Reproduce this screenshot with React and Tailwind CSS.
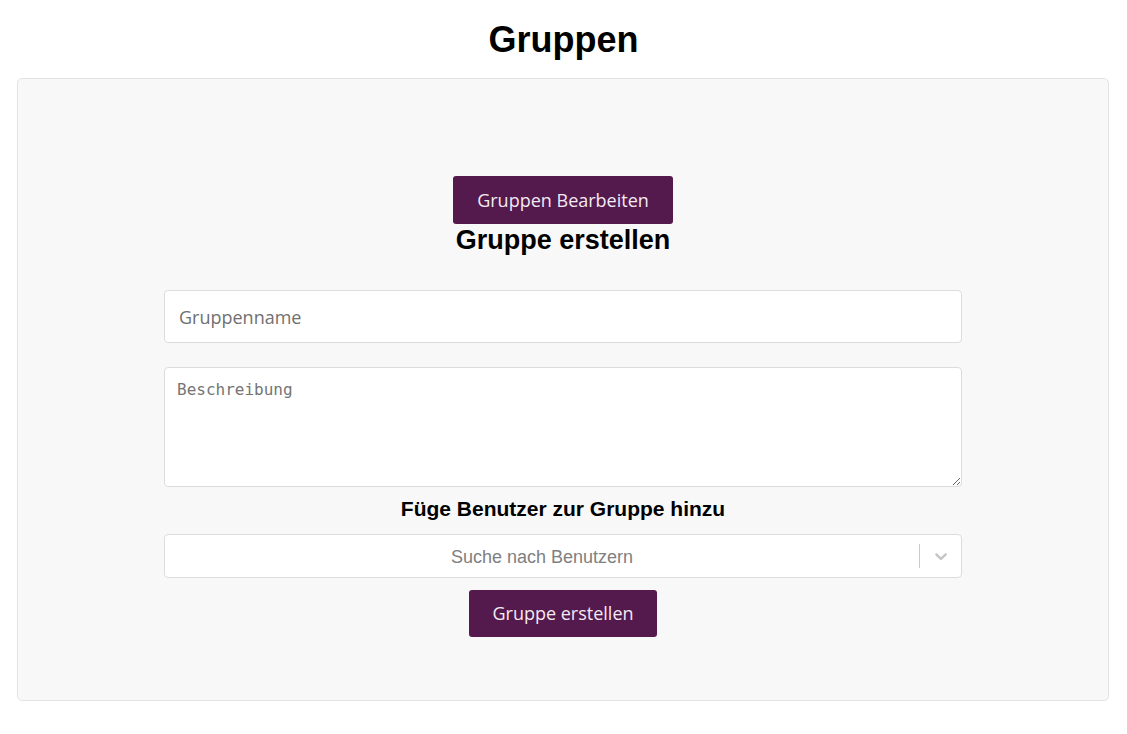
import { useState } from "react";

export default function App() {
  const [name, setName] = useState("");
  const [desc, setDesc] = useState("");

  return (
    <div className="min-h-screen bg-white font-['Liberation_Sans',Arial,sans-serif]">
      <h1 className="pt-[19px] text-center text-[36px] leading-[41px] font-bold text-black">
        Gruppen
      </h1>
      <div className="ml-[17px] mr-[18px] mt-[18px] rounded-[5px] border border-[#e3e3e3] bg-[#f8f8f8] pt-[97px] pb-[63px]">
        <div className="flex flex-col items-center">
          <button className="h-[48px] w-[220px] rounded-[3px] bg-[#54194d] font-['Open_Sans',sans-serif] text-[18px] text-[#f3eaf2]">
            Gruppen Bearbeiten
          </button>
          <h2 className="mt-[1px] text-[27px] leading-[31px] font-bold text-black">
            Gruppe erstellen
          </h2>
        </div>
        <div className="mx-auto mt-[34px] w-[798px]">
          <input
            value={name}
            onChange={(e) => setName(e.target.value)}
            placeholder="Gruppenname"
            className="block h-[53px] w-full rounded-[4px] border border-[#dcdcdc] bg-white px-[14px] font-['Open_Sans',sans-serif] text-[18px] text-black placeholder:text-[#707070] focus:outline-none"
          />
          <textarea
            value={desc}
            onChange={(e) => setDesc(e.target.value)}
            placeholder="Beschreibung"
            className="mt-[24px] block h-[120px] w-full rounded-[4px] border border-[#dcdcdc] bg-white px-[12px] py-[10px] font-['DejaVu_Sans_Mono',monospace] text-[16px] text-black placeholder:text-[#757575] focus:outline-none"
          />
          <h3 className="mt-[10px] text-center text-[21px] leading-[24px] font-bold text-black">
            Füge Benutzer zur Gruppe hinzu
          </h3>
          <div className="mt-[13px] flex h-[44px] w-full items-center rounded-[4px] border border-[#dcdcdc] bg-white">
            <div className="flex-1 pt-[2px] text-center text-[18px] text-[#808080]">
              Suche nach Benutzern
            </div>
            <span className="h-[24px] w-px bg-[#cccccc]" />
            <div className="flex w-[41px] items-center justify-center">
              <svg width="20" height="20" viewBox="0 0 20 20" fill="#c4c4c4">
                <path d="M4.516 7.548c0.436-0.446 1.043-0.481 1.576 0l3.908 3.747 3.908-3.747c0.533-0.481 1.141-0.446 1.574 0 0.436 0.445 0.408 1.197 0 1.615-0.406 0.418-4.695 4.502-4.695 4.502-0.217 0.223-0.502 0.335-0.787 0.335s-0.57-0.112-0.789-0.335c0 0-4.287-4.084-4.695-4.502s-0.436-1.17 0-1.615z" />
              </svg>
            </div>
          </div>
          <div className="mt-[12px] flex justify-center">
            <button className="h-[47px] w-[188px] rounded-[3px] bg-[#54194d] font-['Open_Sans',sans-serif] text-[18px] text-[#f3eaf2]">
              Gruppe erstellen
            </button>
          </div>
        </div>
      </div>
    </div>
  );
}
